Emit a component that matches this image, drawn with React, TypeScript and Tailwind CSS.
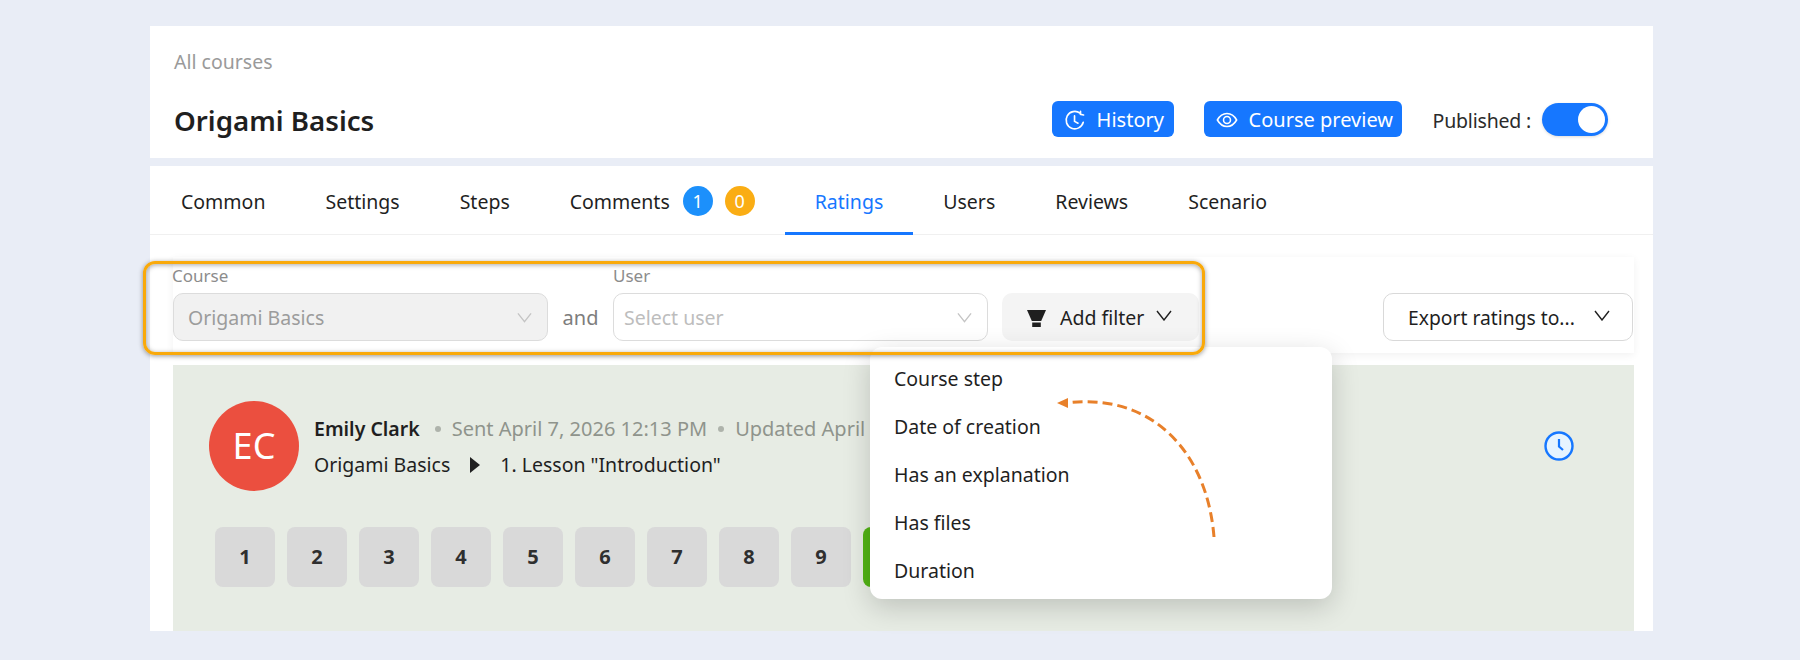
const font = "[font-family:'Noto_Sans',sans-serif]";

const tabs = ["Common", "Settings", "Steps", "Comments", "Ratings", "Users", "Reviews", "Scenario"];
const filterItems = ["Course step", "Date of creation", "Has an explanation", "Has files", "Duration"];
const scores = [1, 2, 3, 4, 5, 6, 7, 8, 9];

function HistoryIcon() {
  return (
    <svg viewBox="0 0 24 24" className="h-[22px] w-[22px]" fill="none" stroke="currentColor" strokeWidth="1.8" strokeLinecap="round">
      <path d="M21 14.500A9.500 9.500 0 1 1 17.500 4.500" />
      <path d="M18 2.500v3.300l3.300 0.700" />
      <path d="M11.500 7.500V13.500l3.800 2" />
    </svg>
  );
}

function EyeIcon() {
  return (
    <svg viewBox="0 0 24 24" className="h-[22px] w-[22px]" fill="none" stroke="currentColor" strokeWidth="1.7">
      <path d="M1.500 12C4 7.500 7.500 5 12 5s8 2.500 10.500 7c-2.500 4.500-6 7-10.500 7s-8-2.500-10.500-7Z" />
      <circle cx="12" cy="12" r="3.800" />
    </svg>
  );
}

function FunnelIcon() {
  return (
    <svg viewBox="0 0 19 17" className="h-[17px] w-[19px]" fill="#1f1f1f">
      <path d="M0 0h19l-4.800 11H4.800Z" />
      <path d="M5.200 12.500h8.600V17H5.200Z" />
    </svg>
  );
}

function ClockIcon() {
  return (
    <svg viewBox="0 0 30 30" className="h-[30px] w-[30px]">
      <circle cx="15" cy="15" r="13.500" fill="#e6f4ff" stroke="#1677ff" strokeWidth="2.400" />
      <path d="M15 8v7.500l4 3.500" fill="none" stroke="#1677ff" strokeWidth="2.200" />
    </svg>
  );
}

function Chevron({ className }: { className: string }) {
  return (
    <svg viewBox="0 0 16 11" className={className} fill="none" stroke="currentColor" strokeWidth="1.400">
      <path d="M1 1l7 9 7-9" />
    </svg>
  );
}

function Badge({ value, color }: { value: number; color: string }) {
  return (
    <span className={`-mt-[2px] flex h-[30px] w-[30px] items-center justify-center rounded-full text-lg text-white ${color}`}>
      {value}
    </span>
  );
}

export default function App() {
  return (
    <div className={`relative h-[660px] overflow-hidden bg-[#e9edf6] pl-[150px] pt-[26px] ${font}`}>
      <div className="flex h-[605px] w-[1503px] flex-col gap-2 overflow-hidden">
        <header className="flex h-[132px] shrink-0 flex-col bg-white pl-6 pr-[45px]">
          <a className="mt-6 text-[19.500px] leading-6 text-[#9a9a9a]">All courses</a>
          <div className="mt-[27px] flex items-start justify-between">
            <h1 className="pt-px text-[27.700px] leading-9 font-semibold text-[#1f1f1f]">Origami Basics</h1>
            <div className="flex items-center">
              <button className="flex h-9 w-[122px] items-center gap-[11px] rounded-md bg-[#1677ff] pl-[12px] pt-[2px] text-xl text-white">
                <HistoryIcon />
                History
              </button>
              <button className="ml-[30px] flex h-9 w-[198px] items-center gap-[11px] rounded-md bg-[#1677ff] pl-[12px] pt-[2px] text-xl text-white">
                <EyeIcon />
                Course preview
              </button>
              <span className="ml-[31px] pt-1 text-[19.500px] tracking-[-0.2px] text-[#2b2b2b]">Published :</span>
              <span className="ml-[11px] flex h-[33px] w-[66px] items-center justify-end rounded-full bg-[#1677ff] pr-[3px] shadow-[0_1px_3px_rgba(0,0,0,0.15)]">
                <span className="h-[27px] w-[27px] rounded-full bg-white" />
              </span>
            </div>
          </div>
        </header>

        <div className="flex min-h-0 flex-1 flex-col bg-white">
          <nav className="flex h-[69px] shrink-0 border-b border-[#f0f0f0] pl-px">
            {tabs.map((tab) => (
              <div
                key={tab}
                className={`-mb-px flex items-center px-[30px] pt-[3px] text-[19.500px] ${
                  tab === "Ratings" ? "border-b-[3px] border-[#1677ff] pt-[6px] text-[#1677ff]" : "text-[#1f1f1f]"
                }`}
              >
                {tab}
                {tab === "Comments" && (
                  <span className="ml-[13px] flex gap-3">
                    <Badge value={1} color="bg-[#1c90fb]" />
                    <Badge value={0} color="bg-[#faad14]" />
                  </span>
                )}
              </div>
            ))}
          </nav>

          <div className="flex min-h-0 flex-1 flex-col gap-3 pl-[23px] pr-[19px] pt-[22px]">
            <div className="flex h-24 shrink-0 items-end bg-white pb-3 pr-px shadow-[0_2px_8px_rgba(0,0,0,0.06)]">
              <div className="w-[375px]">
                <label className="block -ml-px text-[17px] leading-6 text-[#8c8c8c]">Course</label>
                <div className="mt-[5px] flex h-12 items-center justify-between rounded-[10px] border border-[#dcdcdc] bg-[#f1f1f1] pl-[14px] pr-[15px] pt-[2px] text-[19.500px] text-[#9c9c9c]">
                  Origami Basics
                  <Chevron className="-mt-[2px] h-[11px] w-[15px] text-[#c4c4c4]" />
                </div>
              </div>
              <span className="flex h-12 w-[65px] items-center justify-center pt-[2px] text-xl text-[#7d7d7d]">and</span>
              <div className="w-[375px]">
                <label className="block text-[17px] leading-6 text-[#8c8c8c]">User</label>
                <div className="mt-[5px] flex h-12 items-center justify-between rounded-[10px] border border-[#dcdcdc] bg-white pl-[10px] pr-[15px] pt-[2px] text-[19.500px] text-[#bdbdbd]">
                  Select user
                  <Chevron className="-mt-[2px] h-[11px] w-[15px] text-[#c4c4c4]" />
                </div>
              </div>
              <button className="ml-[14px] flex h-12 w-[197px] items-center rounded-[10px] bg-[#f4f4f4] pl-[25px] pt-[2px] text-[19.500px] text-[#1f1f1f]">
                <FunnelIcon />
                <span className="ml-[14px]">Add filter</span>
                <Chevron className="ml-3 -mt-[5px] h-[11px] w-4" />
              </button>
              <button className="ml-auto flex h-12 w-[250px] items-center rounded-[10px] border border-[#d9d9d9] bg-white pl-6 pt-[2px] text-[19.300px] text-[#1f1f1f]">
                Export ratings to...
                <Chevron className="ml-[19px] -mt-[5px] h-[11px] w-4" />
              </button>
            </div>

            <section className="relative min-h-0 flex-1 bg-[#e7ece4] pl-9 pt-9">
              <div className="flex">
                <div className="flex h-[90px] w-[90px] items-center justify-center rounded-full bg-[#eb4f3f] text-4xl text-white">
                  EC
                </div>
                <div className="ml-[15px] flex flex-col gap-[10px] pt-[15px] text-xl leading-[26px]">
                  <div className="flex items-center whitespace-nowrap text-[#8f948c]">
                    <span className="font-semibold text-[19.500px] text-[#1f1f1f]">Emily Clark</span>
                    <span className="ml-[15px] mr-[11px] h-[6px] w-[6px] rounded-full bg-[#aeb3ab]" />
                    Sent April 7, 2026 12:13 PM
                    <span className="mx-[11px] h-[6px] w-[6px] rounded-full bg-[#aeb3ab]" />
                    Updated April 7, 2026 12:13 PM
                  </div>
                  <div className="flex items-center whitespace-nowrap text-[19.500px] text-[#1f1f1f]">
                    Origami Basics
                    <svg viewBox="0 0 10 16" className="mx-5 h-4 w-[10px]" fill="#1f1f1f">
                      <path d="M0 0l10 8-10 8Z" />
                    </svg>
                    1. Lesson "Introduction"
                  </div>
                </div>
              </div>
              <div className="absolute right-[60px] top-[66px]">
                <ClockIcon />
              </div>
              <div className="mt-9 ml-[6px] flex gap-3">
                {scores.map((score) => (
                  <div
                    key={score}
                    className="flex h-[60px] w-[60px] items-center justify-center rounded-lg bg-[#d9d9d9] text-xl font-bold text-[#2f2f2f]"
                  >
                    {score}
                  </div>
                ))}
                <div className="h-[60px] w-[60px] rounded-lg bg-[#52b415]" />
              </div>
            </section>
          </div>
        </div>
      </div>

      {/* dropdown of Add filter */}
      <ul className="absolute left-[870px] top-[347px] flex h-[252px] w-[462px] flex-col rounded-xl bg-white pl-6 pt-2 shadow-[0_8px_28px_rgba(0,0,0,0.18)]">
        {filterItems.map((item) => (
          <li key={item} className="flex h-12 shrink-0 items-center text-[19.500px] text-[#1f1f1f]">
            {item}
          </li>
        ))}
      </ul>

      {/* orange call-out frame and arrow drawn over the page */}
      <div className="absolute left-[143px] top-[261px] h-[94px] w-[1062px] rounded-xl border-[3px] border-[#f9a90a] shadow-[0_1px_5px_rgba(0,0,0,0.4),inset_0_1px_5px_rgba(0,0,0,0.35)]" />
      <svg className="absolute left-[1040px] top-[390px] h-[160px] w-[190px]" viewBox="0 0 190 160" fill="none">
        <path d="M174 147C167 60 110 2 26 13" stroke="#e8802a" strokeWidth="3" strokeDasharray="10 5" />
        <path d="M17 13l11-5v10Z" fill="#e8802a" />
      </svg>
    </div>
  );
}
